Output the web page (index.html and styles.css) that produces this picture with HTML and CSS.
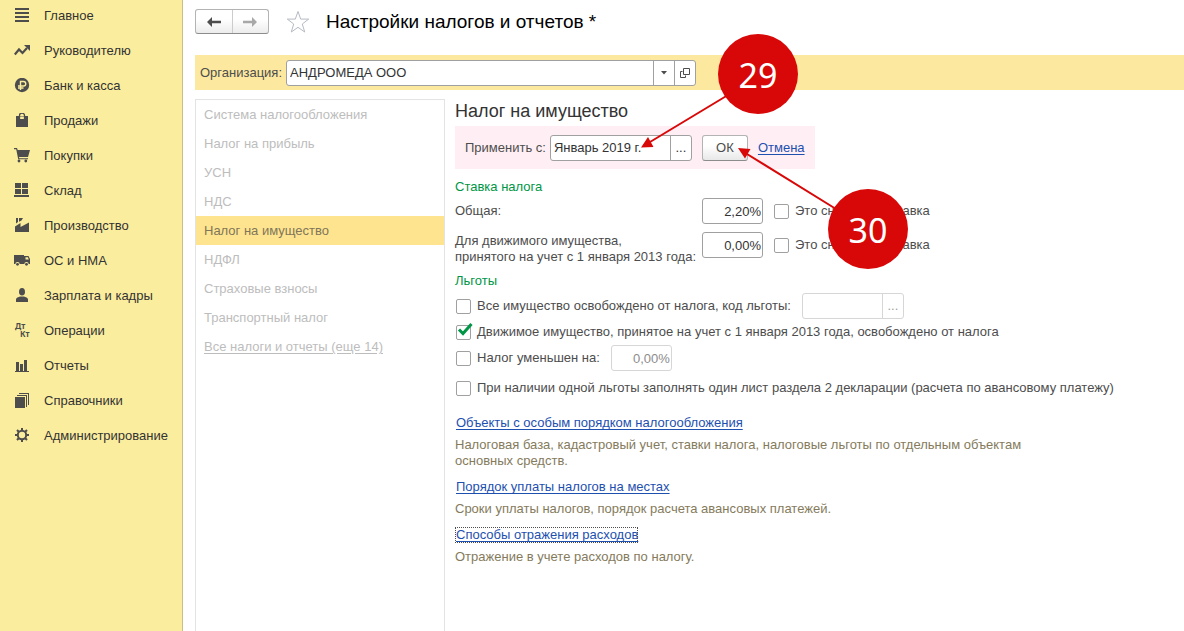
FILE: index.html
```html
<!DOCTYPE html>
<html lang="ru">
<head>
<meta charset="utf-8">
<title>Настройки налогов и отчетов</title>
<link rel="stylesheet" href="styles.css">
</head>
<body>
<div class="app">
  <nav class="sidebar" aria-label="Разделы">
    <a class="section" href="#"><svg class="icon" viewBox="0 0 16 16"><path d="M1 0h14v2H1zM1 4h14v2H1zM1 8h14v2H1zM1 12h14v2H1z"/></svg>Главное</a>
    <a class="section" href="#"><svg class="icon" viewBox="0 0 16 16"><path d="M.8 11.500l4.200-5 3.500 3.500 4.500-5" fill="none" stroke="currentColor" stroke-width="2.200"/><path d="M10 2h6v6z"/></svg>Руководителю</a>
    <a class="section" href="#"><svg class="icon" viewBox="0 0 16 16"><circle cx="8" cy="7" r="7.200"/><path d="M6.500 12V3.500h3a2.200 2.200 0 0 1 0 4.500H4M4 10h5.500" class="cut" stroke-width="1.400"/></svg>Банк и касса</a>
    <a class="section" href="#"><svg class="icon" viewBox="0 0 16 16"><path d="M2 3h12v11H2z"/><path d="M5 3.500h6v2.500H5z" class="hole"/><path d="M5.500 6V2.500a2.500 2.500 0 0 1 5 0V6" fill="none" stroke="currentColor" stroke-width="1.300"/></svg>Продажи</a>
    <a class="section" href="#"><svg class="icon" viewBox="0 0 16 16"><path d="M0 0h3l.7 2H16l-2 7H5l.3 1.200H14v1H4.200L2.200 1.300H0z"/><circle cx="5" cy="13" r="1.400"/><circle cx="11.800" cy="13" r="1.400"/></svg>Покупки</a>
    <a class="section" href="#"><svg class="icon" viewBox="0 0 16 16"><path d="M1 0h6v5H1zM8 0h6v5H8zM1 6h6v5H1zM8 6h6v5H8zM0 12h15v2H0z"/></svg>Склад</a>
    <a class="section" href="#"><svg class="icon" viewBox="0 0 16 16"><path d="M1 14V8.500L6.500 5v4L15 4.500V14zM2 0h2v4L2 5.500zM5 0h4L7.500 2.500 5 3.800z"/></svg>Производство</a>
    <a class="section" href="#"><svg class="icon" viewBox="0 0 16 16"><path d="M0 2h10v9H0zM10 3h4.500L16 6v5h-6z"/><path d="M11.500 4.300h2.400l.9 2.200h-3.300z" class="hole"/><circle cx="3.500" cy="11.300" r="2.200" class="hole"/><circle cx="12.500" cy="11.300" r="2.200" class="hole"/><circle cx="3.500" cy="11.300" r="1.400"/><circle cx="12.500" cy="11.300" r="1.400"/></svg>ОС и НМА</a>
    <a class="section" href="#"><svg class="icon" viewBox="0 0 16 16"><ellipse cx="8" cy="3.800" rx="3" ry="3.800"/><path d="M2 14v-2.500c0-2 2.500-2.500 4-3h4c1.500.5 4 1 4 3V14z"/></svg>Зарплата и кадры</a>
    <a class="section" href="#"><svg class="icon debit" viewBox="0 0 16 16"><text x="1" y="6">Дт</text><text x="6" y="14">Кт</text></svg>Операции</a>
    <a class="section" href="#"><svg class="icon" viewBox="0 0 16 16"><path d="M2 4h3v9h1V6h3v7h1V2h3v11h2v1H1v-1h1z"/></svg>Отчеты</a>
    <a class="section" href="#"><svg class="icon" viewBox="0 0 16 16"><path d="M1 4h10v11H1zM3 2h10v12h-1V3H3zM5 0h10v12h-1V1H5z"/></svg>Справочники</a>
    <a class="section" href="#"><svg class="icon" viewBox="0 0 16 16"><circle cx="8" cy="7" r="4.200" fill="none" stroke="currentColor" stroke-width="2"/><path d="M8 0v3M8 11v3M1 7h3M12 7h3M3 2l2 2M11 10l2 2M13 2l-2 2M5 10l-2 2" stroke="currentColor" stroke-width="2"/></svg>Администрирование</a>
  </nav>

  <main class="main">
    <header class="header">
      <div class="history">
        <button type="button" aria-label="Назад"><svg viewBox="0 0 14 10"><path d="M5 0v3.700h9v2.600H5V10L0 5z"/></svg></button>
        <button type="button" aria-label="Вперед" disabled><svg viewBox="0 0 14 10"><path d="M9 0v3.700H0v2.600h9V10l5-5z"/></svg></button>
      </div>
      <svg class="star" viewBox="0 0 24 24"><path d="M12 1.500l2.700 7.600h8L16.300 14l2.400 8L12 17.300 5.300 22l2.400-8L1.300 9.100h8z"/></svg>
      <h1>Настройки налогов и отчетов *</h1>
    </header>

    <div class="org">
      <label for="org">Организация:</label>
      <div class="field org-field">
        <input id="org" type="text" value="АНДРОМЕДА ООО">
        <button type="button" aria-label="Выбрать"><svg class="caret" viewBox="0 0 6 4"><path d="M0 0h6L3 3.500z"/></svg></button>
        <button type="button" aria-label="Открыть"><svg class="open" viewBox="0 0 10 10"><path d="M3.500.5h6v6h-6zM2.500 3.500h-2v6h5v-2"/></svg></button>
      </div>
    </div>

    <div class="content">
      <nav class="taxes" aria-label="Налоги">
        <a href="#">Система налогообложения</a>
        <a href="#">Налог на прибыль</a>
        <a href="#">УСН</a>
        <a href="#">НДС</a>
        <a href="#" class="current">Налог на имущество</a>
        <a href="#">НДФЛ</a>
        <a href="#">Страховые взносы</a>
        <a href="#">Транспортный налог</a>
        <a href="#" class="more">Все налоги и отчеты (еще 14)</a>
      </nav>

      <form class="panel">
        <h2>Налог на имущество</h2>
        <div class="apply">
          <label for="from">Применить с:</label>
          <div class="field date-field">
            <input id="from" type="text" value="Январь 2019 г.">
            <button type="button" aria-label="Выбрать период">...</button>
          </div>
          <button type="button" class="ok">ОК</button>
          <a href="#" class="link">Отмена</a>
        </div>

        <h3>Ставка налога</h3>
        <div class="rate">
          <label for="rate1">Общая:</label>
          <input id="rate1" class="percent" type="text" value="2,20%">
          <label class="check"><input type="checkbox">Это сниженная ставка</label>
        </div>
        <div class="rate tall">
          <label for="rate2">Для движимого имущества,<br>принятого на учет с 1 января 2013 года:</label>
          <input id="rate2" class="percent" type="text" value="0,00%">
          <label class="check"><input type="checkbox">Это сниженная ставка</label>
        </div>

        <h3 class="benefits">Льготы</h3>
        <div class="option">
          <label class="check"><input type="checkbox">Все имущество освобождено от налога, код льготы:</label>
          <div class="field code-field">
            <input type="text" aria-label="Код льготы" disabled>
            <button type="button" aria-label="Выбрать код" disabled>...</button>
          </div>
        </div>
        <div class="option">
          <label class="check"><input type="checkbox" checked><svg class="tick" viewBox="0 0 16 14"><path d="M2 6.500l4 4L14.500 1"/></svg>Движимое имущество, принятое на учет с 1 января 2013 года, освобождено от налога</label>
        </div>
        <div class="option">
          <label class="check"><input type="checkbox">Налог уменьшен на:</label>
          <input class="percent" type="text" value="0,00%" aria-label="Налог уменьшен на" disabled>
        </div>
        <div class="option last">
          <label class="check"><input type="checkbox">При наличии одной льготы заполнять один лист раздела 2 декларации (расчета по авансовому платежу)</label>
        </div>

        <div class="links">
          <div><a href="#" class="link">Объекты с особым порядком налогообложения</a>
            <p>Налоговая база, кадастровый учет, ставки налога, налоговые льготы по отдельным объектам основных средств.</p></div>
          <div><a href="#" class="link">Порядок уплаты налогов на местах</a>
            <p>Сроки уплаты налогов, порядок расчета авансовых платежей.</p></div>
          <div><a href="#" class="link focused">Способы отражения расходов</a>
            <p>Отражение в учете расходов по налогу.</p></div>
        </div>
      </form>
    </div>
  </main>

  <svg class="callouts" width="300" height="260" viewBox="630 20 300 260">
    <path class="shaft" d="M728 95L650 142M836 209L747 154"/>
    <path d="M641 147.500l7-10.500 5.500 10zM738 148l12.500 1-5.500 9.500z"/>
    <circle cx="758" cy="74" r="40"/>
    <circle cx="868" cy="229" r="40"/>
    <text x="758" y="88">29</text>
    <text x="868" y="243">30</text>
  </svg>
</div>
</body>
</html>
```
FILE: styles.css
```css
* { box-sizing: border-box; }

body {
  margin: 0;
  background: #fff;
  color: #4d4d4d;
  font: 13px/16px "Liberation Sans", Arial, sans-serif;
}

input, button { font: inherit; color: inherit; margin: 0; }
h1, h2, h3, p { margin: 0; font-weight: normal; }

.app {
  position: relative;
  display: flex;
  min-height: 100vh;
  overflow: hidden;
}

/* Sections */
.sidebar {
  flex: none;
  width: 183px;
  display: flex;
  flex-direction: column;
  gap: 5px;
  padding: 1px 0 0 14px;
  background: #fbed9e;
  border-right: 1px solid #c9bf85;
}
.section {
  display: flex;
  align-items: center;
  gap: 14px;
  height: 30px;
  color: #333;
  text-decoration: none;
}
.icon { width: 16px; height: 16px; fill: #4d4d4d; color: #4d4d4d; flex: none; }
.icon .cut { fill: none; stroke: #fbed9e; }
.icon .hole { fill: #fbed9e; }
.debit { font: bold 8px "Noto Sans", sans-serif; overflow: visible; }

/* Header */
.main {
  flex: 1;
  min-width: 0;
  display: flex;
  flex-direction: column;
  padding-left: 12px;
}
.header {
  display: flex;
  align-items: center;
  height: 55px;
  padding-bottom: 12px;
}
.history {
  display: flex;
  width: 74px;
  height: 25px;
  border: 1px solid #b3b3b3;
  border-bottom-color: #8c8c8c;
  border-radius: 3px;
  background: linear-gradient(#fff 40%, #ececec);
}
.history button {
  flex: 1;
  display: flex;
  align-items: center;
  justify-content: center;
  padding: 0;
  border: 0;
  background: none;
}
.history button + button { border-left: 1px solid #ccc; }
.history svg { width: 14px; height: 10px; fill: #4d4d4d; }
.history :disabled svg { fill: #a8a8a8; }
.star { width: 24px; height: 24px; margin: 0 16px 0 17px; fill: #fff; stroke: #b5bac2; }
h1 { font-size: 19px; line-height: 22px; color: #000; }

/* Fields */
.field {
  display: flex;
  height: 26px;
  border: 1px solid #a0a0a0;
  border-radius: 3px;
  background: #fff;
  color: #333;
}
.field input {
  flex: 1;
  min-width: 0;
  padding: 0 3px;
  border: 0;
  background: none;
  outline: 0;
}
.field button {
  width: 21px;
  display: flex;
  align-items: center;
  justify-content: center;
  padding: 0;
  border: 0;
  border-left: 1px solid #a0a0a0;
  background: none;
}
.code-field, .code-field button { border-color: #d6d6d6; color: #a0a0a0; }
.caret { width: 6px; height: 4px; fill: #4d4d4d; }
.open { width: 10px; height: 10px; fill: none; stroke: #4d4d4d; }

.org {
  display: flex;
  align-items: center;
  gap: 4px;
  height: 35px;
  padding-left: 5px;
  background: #fce99f;
}
.org-field { width: 410px; }

/* Tax list */
.content { flex: 1; display: flex; gap: 10px; padding-top: 9px; }
.taxes {
  flex: none;
  width: 250px;
  display: flex;
  flex-direction: column;
  border: 1px solid #e3e3e3;
  border-bottom: 0;
}
.taxes a {
  height: 29px;
  padding-left: 8px;
  line-height: 30px;
  color: #bdbdbd;
  text-decoration: none;
}
.taxes .current { background: #ffe48f; color: #807659; }
.taxes .more { text-decoration: underline; text-underline-offset: 2px; }

/* Panel */
.panel { flex: 1; min-width: 0; padding-top: 1px; }
h2 { font-size: 18px; line-height: 22px; color: #333; }
h3 { margin-top: 10px; font-size: 13px; line-height: 16px; color: #009646; }
.benefits { margin-top: 8px; }
.apply {
  display: flex;
  align-items: center;
  gap: 10px;
  width: 360px;
  height: 43px;
  margin-top: 4px;
  padding-left: 10px;
  background: #ffeff4;
}
.apply label { margin-right: -6px; }
.date-field { width: 142px; }
.ok {
  width: 46px;
  height: 26px;
  padding: 0;
  border: 1px solid #b3b3b3;
  border-bottom-color: #8c8c8c;
  border-radius: 3px;
  background: linear-gradient(#fff 40%, #e8e8e8);
}
.link {
  color: #1e50b0;
  text-decoration: underline;
  text-underline-offset: 2px;
  text-decoration-skip-ink: none;
}
.rate {
  display: grid;
  grid-template-columns: 247px 61px 1fr;
  align-items: center;
  margin-top: 3px;
}
.rate.tall { align-items: start; margin-top: 8px; }
.rate.tall > label:first-child { padding-top: 1px; }
.rate .check { height: 26px; padding-left: 11px; }
.percent {
  width: 61px;
  height: 26px;
  padding: 0 1px;
  border: 1px solid #a0a0a0;
  border-radius: 3px;
  background: #fff;
  color: #333;
  text-align: right;
}
.percent:disabled { border-color: #d6d6d6; color: #8c8c8c; }
.check { position: relative; display: flex; align-items: center; gap: 6px; }
.check input {
  appearance: none;
  width: 15px;
  height: 15px;
  border: 1px solid #a0a0a0;
  border-radius: 2px;
  background: #fff;
}
.tick {
  position: absolute;
  left: 1px;
  top: -1px;
  width: 16px;
  height: 14px;
  fill: none;
  stroke: #009646;
  stroke-width: 3;
}
.option {
  display: flex;
  align-items: center;
  gap: 11px;
  height: 26px;
  padding-left: 1px;
}
.option.last { margin-top: 4px; }
.benefits + .option { margin-top: 4px; }
.code-field { width: 102px; }

.links { display: grid; gap: 10px; margin-top: 14px; }
.links .link { display: inline-block; padding-left: 1px; }
.links .focused { outline: 1px dotted #4d4d4d; outline-offset: -1px; }
.links p { max-width: 600px; margin-top: 6px; color: #857b5c; }

/* Numbered callouts */
.callouts { position: absolute; left: 630px; top: 20px; fill: #d80808; pointer-events: none; }
.callouts .shaft { stroke: #d80808; stroke-width: 2; }
.callouts text { fill: #fff; font: 34px "Noto Sans", sans-serif; text-anchor: middle; }
```
